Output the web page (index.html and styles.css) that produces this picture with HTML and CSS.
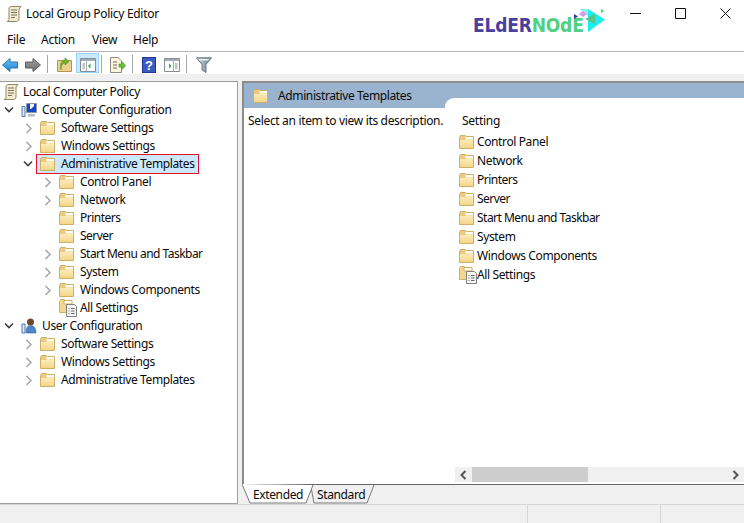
FILE: index.html
```html
<!DOCTYPE html>
<html lang="en">
<head>
<meta charset="utf-8">
<title>Local Group Policy Editor</title>
<link rel="stylesheet" href="styles.css">
</head>
<body>
<svg class="sprite" aria-hidden="true">
  <defs>
    <linearGradient id="fg" x1="0" y1="0" x2="0" y2="1"><stop offset="0" stop-color="#fcebb8"/><stop offset="1" stop-color="#f3d689"/></linearGradient>
    <linearGradient id="bl" x1="0" y1="0" x2="0" y2="1"><stop offset="0" stop-color="#6cc4f5"/><stop offset="1" stop-color="#1f80d0"/></linearGradient>
    <linearGradient id="gr" x1="0" y1="0" x2="0" y2="1"><stop offset="0" stop-color="#a3a3a3"/><stop offset="1" stop-color="#6a6a6a"/></linearGradient>
    <linearGradient id="fn" x1="0" y1="0" x2="1" y2="0"><stop offset="0" stop-color="#c6d2da"/><stop offset="1" stop-color="#6d808e"/></linearGradient>
    <symbol id="folder" viewBox="0 0 15 14">
      <path d="M.5 2.500V13.500H14.500V1.500H7.500L6.500 .5H1.500Z" fill="#ecca80" stroke="#cfb069"/>
      <path d="M6.500 2H14V4.500H6.500Z" fill="#fffdf2"/>
      <path d="M1 5H14V13H1Z" fill="url(#fg)"/>
    </symbol>
    <symbol id="scroll" viewBox="0 0 16 16">
      <path d="M5 .5H15L13 3V13C13 14.500 12 15.500 10.500 15.500H1C2.500 15 3 14 3 13V3C3 1.500 4 .5 5 .5Z" fill="#f3ecce" stroke="#8f876c"/>
      <path d="M5 4H11M5 6.500H11M5 9H11M5 11.500H9" stroke="#77715e"/>
    </symbol>
    <symbol id="chev-r" viewBox="0 0 8 11"><path d="M1.500 1 6 5.500 1.500 10" fill="none" stroke="#a6a6a6" stroke-width="1.500"/></symbol>
    <symbol id="chev-d" viewBox="0 0 10 8"><path d="M1 1.500 5 5.500 9 1.500" fill="none" stroke="#404040" stroke-width="1.600"/></symbol>
    <symbol id="allset" viewBox="0 0 18 18">
      <path d="M.5 2.500V13.500H8V1.500H6.500L5.500 .5H1.500Z" fill="#f3d78f" stroke="#cfb069"/>
      <path d="M5 1.500H13V5H5Z" fill="#fffdf2" stroke="#cfb069"/>
      <path d="M7.500 5.500H15.500L17.500 7.500V17.500H7.500Z" fill="#f6f6f6" stroke="#808080"/>
      <path d="M9.500 9.500H10.500M12 9.500H15.500M9.500 12H10.500M12 12H15.500M9.500 14.500H10.500M12 14.500H15.500" stroke="#666"/>
    </symbol>
    <symbol id="pane" viewBox="0 0 16 14">
      <path d="M.5 .5H15.500V13.500H.5Z" fill="#fbfbfb" stroke="#838c95"/>
      <path d="M1 1H15V3H1Z" fill="#a4adb6"/>
    </symbol>
  </defs>
</svg>

<div class="app">
  <header class="titlebar">
    <svg class="title-icon"><use href="#scroll"/></svg>
    <span class="title-text">Local Group Policy Editor</span>
    <div class="winbtns">
      <svg class="winbtn" viewBox="0 0 11 11"><path d="M0 5.500H11" stroke="#111"/></svg>
      <svg class="winbtn" viewBox="0 0 11 11"><path d="M.5 .5H10.500V10.500H.5Z" fill="none" stroke="#111"/></svg>
      <svg class="winbtn" viewBox="0 0 11 11"><path d="M.5 .5 10.500 10.500M10.500 .5 .5 10.500" stroke="#111"/></svg>
    </div>
  </header>

  <div class="logo">
    <span class="logo-text"><span class="logo-a">ELdER</span><span class="logo-b">NOdE</span></span>
    <svg class="logo-mark" viewBox="0 0 36 28">
      <path d="M16 3 33 13.500 16 26Z" fill="#19f0ee"/>
      <path d="M7 3H16V10Z" fill="#8ff2ee"/>
      <path d="M7 8 11 5 15 8 11 11Z" fill="#d79ae8"/>
      <path d="M2 8 6 10.500 2 13Z" fill="#3f3a9e"/>
      <path d="M13 13 23 8V18Z" fill="#57c58a"/>
      <path d="M29 3 32.500 5 29 7Z" fill="#4ecf80"/>
    </svg>
  </div>

  <nav class="menubar">
    <span class="m-file">File</span>
    <span class="m-action">Action</span>
    <span class="m-view">View</span>
    <span class="m-help">Help</span>
  </nav>

  <div class="toolbar">
    <button class="tb tb-back"><svg viewBox="0 0 16 14"><path d="M8 .5V4H15.500V10H8V13.500L.5 7Z" fill="url(#bl)" stroke="#2577b8"/></svg></button>
    <button class="tb tb-fwd"><svg viewBox="0 0 16 14"><path d="M8 .5V4H.5V10H8V13.500L15.500 7Z" fill="url(#gr)" stroke="#5c5c5c"/></svg></button>
    <i class="tsep sep1"></i>
    <button class="tb tb-up"><svg viewBox="0 0 15 15"><path d="M.5 3.500H14.500V14.500H.5Z" fill="#ecd08f" stroke="#b49450"/><path d="M4 13C4 8 6 6 8 6V8L12 4.500 8 .8V3C5 3 2.500 6 4 13Z" fill="#6cb52d" stroke="#4f8f1e" stroke-width=".6"/></svg></button>
    <button class="tb tb-tree active"><svg viewBox="0 0 16 14"><use href="#pane"/><path d="M2.500 6H5M2.500 8H5M2.500 10H5" stroke="#8a8f96"/><path d="M6.500 3V13" stroke="#a8b0b8"/><path d="M8 8 10.500 5.500V10.500Z" fill="#33a852"/></svg></button>
    <i class="tsep sep2"></i>
    <button class="tb tb-export"><svg viewBox="0 0 16 16"><path d="M.5 .5H8L11.500 4V15.500H.5Z" fill="#fbf5dc" stroke="#8c8c80"/><path d="M3 5H7M3 8H7M3 11H7" stroke="#666"/><path d="M9 7H12V4.500L15.800 8.500 12 12.500V10H9Z" fill="#63c23a" stroke="#4a9a2a" stroke-width=".6"/></svg></button>
    <i class="tsep sep3"></i>
    <button class="tb tb-help"><svg viewBox="0 0 14 16"><path d="M0 0H14V16H0Z" fill="#23389a"/><path d="M1 1H13V15H1Z" fill="#3a5cc0"/><text x="7" y="13" class="help-q">?</text></svg></button>
    <button class="tb tb-act"><svg viewBox="0 0 16 14"><use href="#pane"/><path d="M5 5.500 7.500 8 5 10.500Z" fill="#33a852"/><path d="M9.500 3V13" stroke="#a8b0b8"/><path d="M11 6H13.500M11 8H13.500M11 10H13.500" stroke="#8a8f96"/></svg></button>
    <i class="tsep sep4"></i>
    <button class="tb tb-filter"><svg viewBox="0 0 16 16"><path d="M.5 .8H15.500L10 7.500V15.500L6 13V7.500Z" fill="url(#fn)" stroke="#6d7c87"/><path d="M2.500 2H13.500L12 3.500H4Z" fill="#eef3f6"/></svg></button>
  </div>
  <div class="band"></div>

  <main class="main">
    <section class="tree">
      <div class="row l0"><svg class="ic16"><use href="#scroll"/></svg><span class="lbl root-lbl">Local Computer Policy</span></div>

      <div class="row l1"><svg class="chev-d"><use href="#chev-d"/></svg>
        <svg class="ic16 ic-conf" viewBox="0 0 16 16"><path d="M5.500 1.500H15.500V10.500H5.500Z" fill="#1746c6" stroke="#8d959e"/><path d="M9 2H13V4L10 7H9Z" fill="#fff"/><path d="M1 4.500H4V14.500H1Z" fill="#e3e9f0" stroke="#4f79ad"/><path d="M7 12H14V14.500H7Z" fill="#b5bcc5"/></svg>
        <span class="lbl">Computer Configuration</span></div>
      <div class="row l2"><svg class="chev-r"><use href="#chev-r"/></svg><svg class="folder"><use href="#folder"/></svg><span class="lbl">Software Settings</span></div>
      <div class="row l2"><svg class="chev-r"><use href="#chev-r"/></svg><svg class="folder"><use href="#folder"/></svg><span class="lbl">Windows Settings</span></div>
      <div class="row l2 open"><svg class="chev-d"><use href="#chev-d"/></svg><span class="sel"><svg class="folder"><use href="#folder"/></svg><span class="lbl">Administrative Templates</span></span></div>
      <div class="row l3"><svg class="chev-r"><use href="#chev-r"/></svg><svg class="folder"><use href="#folder"/></svg><span class="lbl">Control Panel</span></div>
      <div class="row l3"><svg class="chev-r"><use href="#chev-r"/></svg><svg class="folder"><use href="#folder"/></svg><span class="lbl">Network</span></div>
      <div class="row l3 leaf"><svg class="folder"><use href="#folder"/></svg><span class="lbl lbl-tight">Printers</span></div>
      <div class="row l3 leaf"><svg class="folder"><use href="#folder"/></svg><span class="lbl lbl-tight">Server</span></div>
      <div class="row l3"><svg class="chev-r"><use href="#chev-r"/></svg><svg class="folder"><use href="#folder"/></svg><span class="lbl lbl-tight">Start Menu and Taskbar</span></div>
      <div class="row l3"><svg class="chev-r"><use href="#chev-r"/></svg><svg class="folder"><use href="#folder"/></svg><span class="lbl">System</span></div>
      <div class="row l3"><svg class="chev-r"><use href="#chev-r"/></svg><svg class="folder"><use href="#folder"/></svg><span class="lbl">Windows Components</span></div>
      <div class="row l3 leaf"><svg class="allset"><use href="#allset"/></svg><span class="lbl">All Settings</span></div>

      <div class="row l1"><svg class="chev-d"><use href="#chev-d"/></svg>
        <svg class="ic16 ic-conf" viewBox="0 0 16 16"><circle cx="9.500" cy="4" r="3.500" fill="#6b4a2f"/><path d="M5 15C5 9 7 7.500 9.500 7.500S15 9 15 15Z" fill="#4d86c9" stroke="#3b6699" stroke-width=".6"/><path d="M1 6H4V15H1Z" fill="#e3e9f0" stroke="#4f79ad"/></svg>
        <span class="lbl">User Configuration</span></div>
      <div class="row l2"><svg class="chev-r"><use href="#chev-r"/></svg><svg class="folder"><use href="#folder"/></svg><span class="lbl">Software Settings</span></div>
      <div class="row l2"><svg class="chev-r"><use href="#chev-r"/></svg><svg class="folder"><use href="#folder"/></svg><span class="lbl">Windows Settings</span></div>
      <div class="row l2"><svg class="chev-r"><use href="#chev-r"/></svg><svg class="folder"><use href="#folder"/></svg><span class="lbl">Administrative Templates</span></div>
    </section>

    <section class="right">
      <div class="panes">
        <div class="desc">
          <div class="desc-head"><svg class="folder"><use href="#folder"/></svg><span class="lbl">Administrative Templates</span></div>
          <p class="desc-text">Select an item to view its description.</p>
        </div>
        <div class="listcol">
          <div class="listbody">
            <div class="list-head">Setting</div>
            <div class="item"><svg class="folder"><use href="#folder"/></svg><span class="lbl">Control Panel</span></div>
            <div class="item"><svg class="folder"><use href="#folder"/></svg><span class="lbl">Network</span></div>
            <div class="item"><svg class="folder"><use href="#folder"/></svg><span class="lbl lbl-tight">Printers</span></div>
            <div class="item"><svg class="folder"><use href="#folder"/></svg><span class="lbl lbl-tight">Server</span></div>
            <div class="item"><svg class="folder"><use href="#folder"/></svg><span class="lbl lbl-tight">Start Menu and Taskbar</span></div>
            <div class="item"><svg class="folder"><use href="#folder"/></svg><span class="lbl">System</span></div>
            <div class="item"><svg class="folder"><use href="#folder"/></svg><span class="lbl">Windows Components</span></div>
            <div class="item"><svg class="allset"><use href="#allset"/></svg><span class="lbl">All Settings</span></div>
          </div>
          <div class="hscroll">
            <svg class="arr" viewBox="0 0 8 10"><path d="M6 1 2 5 6 9" fill="none" stroke="#555" stroke-width="2"/></svg>
            <div class="track"><div class="thumb"></div></div>
            <svg class="arr" viewBox="0 0 8 10"><path d="M2 1 6 5 2 9" fill="none" stroke="#555" stroke-width="2"/></svg>
          </div>
        </div>
      </div>
      <div class="tabs">
        <div class="tab tab-ext">
          <svg class="tab-bg" viewBox="0 0 72 20"><path d="M0 0 8 19H64L71 1" fill="#fff" stroke="#7a7a7a"/></svg>
          <span class="tab-t">Extended</span>
        </div>
        <div class="tab tab-std">
          <svg class="tab-bg" viewBox="0 0 66 19"><path d="M0 2 3 18H56L63 0" fill="#f0f0f0" stroke="#7a7a7a"/></svg>
          <span class="tab-t">Standard</span>
        </div>
      </div>
    </section>
  </main>

  <footer class="status">
    <div class="st st1"></div>
    <div class="st st2"></div>
    <div class="st st3"></div>
  </footer>
</div>
</body>
</html>
```
FILE: styles.css
```css
* { box-sizing: border-box; }
html, body { margin: 0; padding: 0; }
body {
  width: 744px;
  height: 523px;
  overflow: hidden;
  background: #fff;
  color: #0a0a0a;
  font: 12px/16px "Noto Sans", "Open Sans", sans-serif;
  letter-spacing: -0.25px;
}
.sprite { position: absolute; width: 0; height: 0; }
svg { display: block; flex: none; }
.app { position: relative; display: flex; flex-direction: column; height: 523px; }

.titlebar { display: flex; align-items: center; height: 28px; padding-left: 6px; flex: none; }
.title-icon { width: 16px; height: 16px; }
.title-text { margin-left: 4px; letter-spacing: -0.3px; }
.winbtns { display: flex; margin-left: auto; gap: 34px; padding-right: 13px; margin-top: -2px; }
.winbtn { width: 11px; height: 11px; }

.logo { position: absolute; left: 473px; top: 6px; width: 135px; height: 28px; }
.logo-text { display: block; font: bold 19px/20px "DejaVu Sans Condensed", "DejaVu Sans", sans-serif; letter-spacing: -0.2px; margin-top: 9px; white-space: nowrap; }
.logo-a { color: #4a3f9f; }
.logo-b { color: #4fd182; }
.logo-mark { position: absolute; left: 99px; top: 0; width: 36px; height: 28px; }

.menubar { display: flex; height: 24px; align-items: center; flex: none; padding-left: 7px; border-bottom: 1px solid #b4b4bc; }
.m-file { width: 34px; }
.m-action { width: 51px; }
.m-view { width: 41px; }

.toolbar { position: relative; display: flex; align-items: center; height: 22px; flex: none; padding-left: 2px; }
.tb { display: flex; align-items: center; justify-content: center; border: 0; padding: 3px 0 0; background: none; height: 20px; }
.tb svg { width: 16px; height: 14px; }
.tb-back { width: 16px; }
.tb-fwd { width: 16px; margin-left: 7px; }
.tsep { display: block; width: 1px; height: 18px; margin-top: 2px; background: #a8a8a8; flex: none; }
.sep1 { margin-left: 6px; }
.tb-up { width: 15px; margin-left: 9px; }
.tb-up svg { width: 15px; height: 15px; }
.tb-tree { width: 23px; margin-left: 4px; }
.active { background: #cce8ff; border: 1px solid #99d1ff; }
.sep2 { margin-left: 2px; }
.tb-export { width: 16px; margin-left: 8px; }
.tb-export svg { height: 16px; }
.sep3 { margin-left: 6px; }
.tb-help { width: 14px; margin-left: 9px; }
.tb-help svg { width: 14px; height: 16px; }
.help-q { font: bold 13px "Liberation Sans", sans-serif; fill: #fff; text-anchor: middle; }
.tb-act { width: 16px; margin-left: 8px; }
.sep4 { margin-left: 6px; }
.tb-filter { width: 16px; margin-left: 9px; }
.tb-filter svg { height: 16px; }

.band { height: 7px; flex: none; background: #f0f0f0; }

.main { display: flex; flex: 1; min-height: 0; background: #f0f0f0; }
.tree { width: 238px; flex: none; background: #fff; padding-top: 1px; border-top: 1px solid #9a9a9a; border-right: 1px solid #a0a0a0; border-bottom: 1px solid #a0a0a0; }
.row { display: flex; align-items: center; height: 18px; position: relative; }
.lbl { white-space: nowrap; letter-spacing: -0.38px; }
.lbl-tight { letter-spacing: -0.52px; }
.ic16 { width: 16px; height: 16px; }
.l0 { padding-left: 3px; }
.root-lbl { margin-left: 4px; }
.l1 { padding-left: 4px; }
.l1 .chev-d { margin-right: 7px; }
.l1 .lbl { margin-left: 5px; }
.chev-d { width: 10px; height: 8px; }
.chev-r { width: 8px; height: 11px; }
.folder { width: 15px; height: 14px; }
.allset { width: 18px; height: 18px; }
.l2 { padding-left: 25px; }
.l2 .chev-r { margin-right: 7px; }
.l2 .lbl { margin-left: 6px; }
.l3 { padding-left: 44px; }
.l3 .chev-r { margin-right: 7px; }
.l3 .lbl { margin-left: 6px; }
.leaf { padding-left: 59px; }
.leaf .allset { margin-right: -3px; }
.open { padding-left: 23px; }
.sel { display: flex; align-items: center; height: 18px; margin-left: 4px; padding: 0 3px; background: #cce8ff; outline: 1px solid #e8112d; width: 161px; }
.sel .lbl { margin-left: 6px; }

.right { flex: 1; margin-left: 4px; display: flex; flex-direction: column; min-width: 0; }
.panes { flex: 1; display: flex; min-height: 0; background: #fff; border-top: 2px solid #8c8c8c; border-left: 2px solid #8c8c8c; border-bottom: 1px solid #666; }
.desc { width: 201px; flex: none; }
.desc-head { height: 25px; background: #9ab3cf; display: flex; align-items: center; padding-left: 9px; }
.desc-head .lbl { margin-left: 10px; }
.desc-text { margin: 5px 0 0 4px; white-space: nowrap; letter-spacing: -0.33px; }
.listcol { flex: 1; min-width: 0; display: flex; flex-direction: column; background: linear-gradient(#9ab3cf 25px, #fff 25px); }
.listbody { flex: 1; margin-top: 15px; background: #fff; border-top-left-radius: 9px; padding: 13px 0 0 14px; min-height: 0; }
.list-head { height: 19px; padding-left: 3px; line-height: 19px; margin-bottom: 2px; }
.item { display: flex; align-items: center; height: 19px; }
.item .lbl { margin-left: 3px; }
.item .allset { margin-right: -3px; }
.hscroll { display: flex; align-items: center; height: 15px; margin: 0 0 2px 10px; background: #f0f0f0; flex: none; }
.arr { width: 17px; height: 10px; }
.track { flex: 1; height: 15px; }
.thumb { width: 116px; height: 15px; background: #cdcdcd; }

.tabs { display: flex; height: 19px; flex: none; }
.tab { position: relative; height: 19px; display: flex; align-items: center; }
.tab-bg { position: absolute; left: 0; top: 0; width: 100%; height: 100%; }
.tab-t { position: relative; letter-spacing: -0.38px; }
.tab-ext { width: 72px; height: 20px; margin-top: -1px; padding: 1px 0 0 11px; z-index: 1; }
.tab-std { width: 66px; margin-left: -3px; padding-left: 6px; }

.status { display: flex; height: 19px; flex: none; background: #f0f0f0; border-top: 1px solid #d6d6d6; }
.st { height: 100%; border-right: 1px solid #d6d6d6; }
.st1 { width: 528px; }
.st2 { width: 133px; }
.st3 { flex: 1; border-right: 0; }
```
